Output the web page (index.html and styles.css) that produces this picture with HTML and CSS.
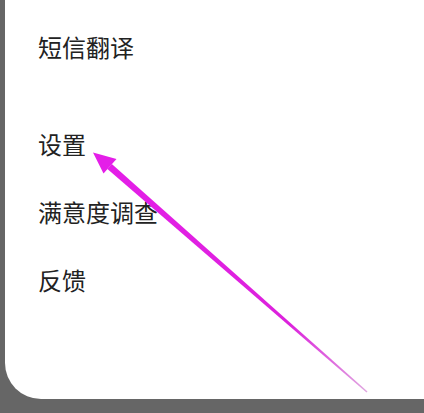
FILE: index.html
```html
<!DOCTYPE html>
<html lang="zh">
<head>
<meta charset="utf-8">
<link rel="stylesheet" href="styles.css">
</head>
<body>
<div class="panel">
  <ul class="menu">
    <li class="item">短信翻译</li>
    <li class="item group">设置</li>
    <li class="item">满意度调查</li>
    <li class="item">反馈</li>
  </ul>
</div>
<svg class="arrow" width="424" height="413" viewBox="0 0 424 413">
  <defs>
    <linearGradient id="g" gradientUnits="userSpaceOnUse" x1="110" y1="166" x2="367" y2="392">
      <stop offset="0" stop-color="#e41ee8"/>
      <stop offset="0.7" stop-color="#dc22dc"/>
      <stop offset="1" stop-color="#e0a8e0"/>
    </linearGradient>
  </defs>
  <polygon points="107.4,169 111.8,164 367.5,391.4 366.5,392.6" fill="url(#g)"/>
  <polygon points="93,152.5 103.5,173.5 116.5,159" fill="#e41ee8"/>
</svg>
</body>
</html>
```
FILE: styles.css
```css
html, body {
  margin: 0;
  padding: 0;
}
body {
  width: 424px;
  height: 413px;
  background: #666666;
  position: relative;
  overflow: hidden;
  font-family: "Noto Sans CJK SC", "Noto Sans", sans-serif;
}
.panel {
  margin-left: 5px;
  height: 399px;
  background: #ffffff;
  border-bottom-left-radius: 36px;
}
.menu {
  list-style: none;
  margin: 0;
  padding: 12px 0 0 33px;
}
.item {
  height: 68px;
  display: flex;
  align-items: center;
  font-size: 24px;
  color: #222222;
}
.item.group {
  margin-top: 29px;
}
.arrow {
  position: absolute;
  left: 0;
  top: 0;
}
```
